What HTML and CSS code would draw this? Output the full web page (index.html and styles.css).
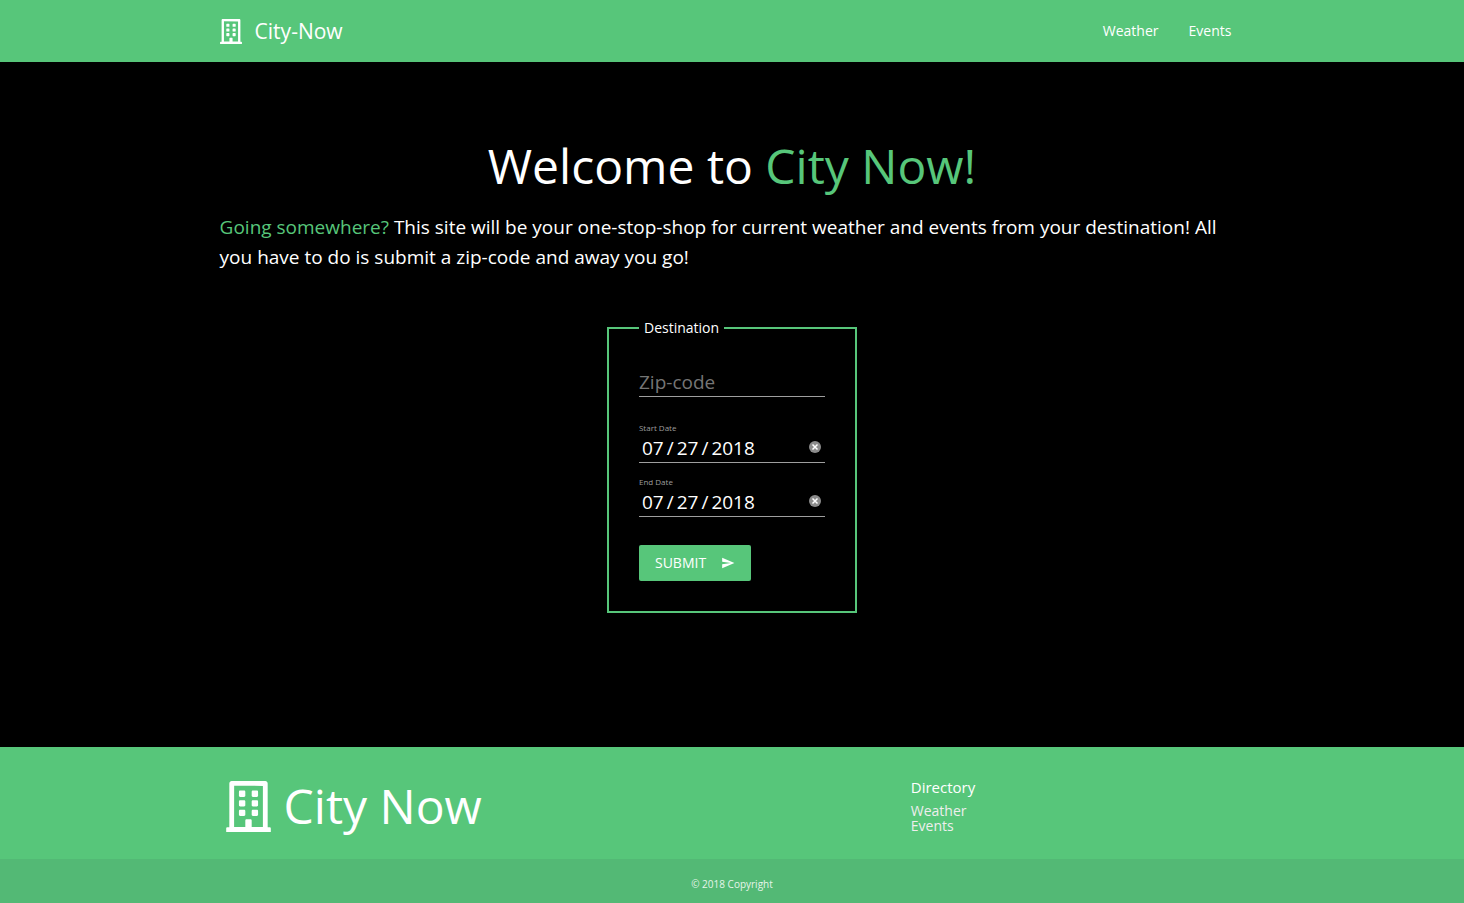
FILE: index.html
```html
<!DOCTYPE html>
<html lang="en">
<head>
  <meta charset="utf-8">
  <meta name="viewport" content="width=device-width, initial-scale=1">
  <title>City-Now</title>
  <link rel="stylesheet" href="styles.css">
</head>
<body>
  <svg class="sprite" aria-hidden="true">
    <symbol id="building" viewBox="0 0 448 512">
      <path d="M128 148v-40c0-6.6 5.4-12 12-12h40c6.6 0 12 5.4 12 12v40c0 6.6-5.4 12-12 12h-40c-6.6 0-12-5.4-12-12zm140 12h40c6.6 0 12-5.4 12-12v-40c0-6.6-5.4-12-12-12h-40c-6.6 0-12 5.4-12 12v40c0 6.6 5.4 12 12 12zm-128 96h40c6.6 0 12-5.4 12-12v-40c0-6.6-5.4-12-12-12h-40c-6.6 0-12 5.4-12 12v40c0 6.6 5.4 12 12 12zm128 0h40c6.6 0 12-5.4 12-12v-40c0-6.6-5.4-12-12-12h-40c-6.6 0-12 5.4-12 12v40c0 6.6 5.4 12 12 12zm-76 84v-40c0-6.6-5.4-12-12-12h-40c-6.6 0-12 5.4-12 12v40c0 6.6 5.4 12 12 12h40c6.6 0 12-5.4 12-12zm76 12h40c6.6 0 12-5.4 12-12v-40c0-6.6-5.4-12-12-12h-40c-6.6 0-12 5.4-12 12v40c0 6.6 5.4 12 12 12zm180 124v36H0v-36c0-6.6 5.4-12 12-12h19.500V24c0-13.300 10.700-24 24-24h337c13.300 0 24 10.700 24 24v440H436c6.600 0 12 5.400 12 12zM79.500 463H192v-67c0-6.600 5.400-12 12-12h40c6.600 0 12 5.400 12 12v67h112.500V49L80 48l-.5 415z"/>
    </symbol>
    <symbol id="clear" viewBox="0 0 12 12">
      <circle cx="6" cy="6" r="6" fill="#8c8c8c"/>
      <path d="M3.500 3.500l5 5M8.500 3.500l-5 5" stroke="#fff" stroke-width="1.500" fill="none"/>
    </symbol>
  </svg>

  <header class="navbar">
    <nav class="container navbar-inner">
      <a class="brand" href="#"><svg class="brand-icon" aria-hidden="true"><use href="#building"/></svg>City-Now</a>
      <ul class="nav-links">
        <li><a href="#weather">Weather</a></li>
        <li><a href="#events">Events</a></li>
      </ul>
    </nav>
  </header>

  <main class="container main">
    <h1 class="title">Welcome to <span class="accent">City Now!</span></h1>
    <p class="intro"><span class="accent">Going somewhere?</span> This site will be your one-stop-shop for current weather and events from your destination! All you have to do is submit a zip-code and away you go!</p>
    <form class="search">
      <fieldset class="panel">
        <legend>Destination</legend>
        <input class="line-input zip" type="text" placeholder="Zip-code" aria-label="Zip-code">
        <div class="field">
          <label for="start">Start Date</label>
          <div class="date-row">
            <input id="start" type="date" value="2018-07-27">
            <button class="clear" type="button" aria-label="Clear start date"><svg aria-hidden="true"><use href="#clear"/></svg></button>
          </div>
        </div>
        <div class="field">
          <label for="end">End Date</label>
          <div class="date-row">
            <input id="end" type="date" value="2018-07-27">
            <button class="clear" type="button" aria-label="Clear end date"><svg aria-hidden="true"><use href="#clear"/></svg></button>
          </div>
        </div>
        <button class="submit" type="submit">SUBMIT
          <svg class="send" viewBox="0 0 24 24" aria-hidden="true"><path d="M2 21L23 12 2 3v7l15 2-15 2z"/></svg>
        </button>
      </fieldset>
    </form>
  </main>

  <footer class="footer">
    <div class="container footer-inner">
      <div class="footer-brand"><svg class="footer-icon" aria-hidden="true"><use href="#building"/></svg>City Now</div>
      <div class="directory">
        <h2>Directory</h2>
        <ul>
          <li><a href="#weather">Weather</a></li>
          <li><a href="#events">Events</a></li>
        </ul>
      </div>
    </div>
    <div class="copyright">© 2018 Copyright</div>
  </footer>
</body>
</html>
```
FILE: styles.css
```css
* {
  box-sizing: border-box;
}

body {
  display: flex;
  flex-direction: column;
  min-height: 100vh;
  margin: 0;
  background: #000;
  color: #fff;
  font: 14px/1.5 "Open Sans", "Noto Sans", sans-serif;
}

a {
  color: inherit;
  text-decoration: none;
}

ul {
  margin: 0;
  padding: 0;
  list-style: none;
}

svg {
  fill: currentColor;
}

.sprite {
  position: absolute;
  width: 0;
  height: 0;
}

.container {
  width: 70%;
  margin: 0 auto;
}

.accent {
  color: #57c67a;
}

.navbar,
.footer {
  background: #57c67a;
}

.navbar-inner,
.brand,
.nav-links {
  display: flex;
  align-items: center;
}

.navbar-inner {
  justify-content: space-between;
  line-height: 62px;
}

.brand {
  gap: 13px;
  font-size: 21px;
}

.brand-icon {
  width: 22px;
  height: 25px;
}

.nav-links {
  gap: 30px;
  padding-right: 13px;
}

.main {
  flex: 1;
  padding-top: 72px;
}

.title {
  margin: 0;
  font-size: 48px;
  font-weight: 400;
  line-height: 64px;
  text-align: center;
}

.intro {
  margin: 14px 0 0;
  font-size: 19px;
  line-height: 30px;
}

.search {
  display: flex;
  justify-content: center;
  margin-top: 45px;
}

.panel {
  width: 250px;
  margin: 0;
  padding: 28px 30px 30px;
  border: 2px solid #57c67a;
}

.panel legend {
  padding: 0 5px;
  line-height: 22px;
}

.line-input,
.date-row {
  width: 100%;
  border: 0;
  border-bottom: 1px solid #9e9e9e;
}

.panel input {
  background: transparent;
  color: #fff;
  font: 19px/28px "Open Sans", "Noto Sans", sans-serif;
  outline: 0;
}

.zip {
  display: block;
  height: 30px;
  margin-bottom: 25px;
  padding: 0;
}

.zip::placeholder {
  color: #757575;
}

.field {
  margin-bottom: 13px;
}

.field label {
  display: block;
  color: #9e9e9e;
  font-size: 8px;
  line-height: 12px;
}

.date-row {
  display: flex;
  align-items: center;
  justify-content: space-between;
  padding: 0 4px 0 2px;
}

.date-row input {
  width: 150px;
  height: 28px;
  padding: 0;
  border: 0;
}

.date-row input::-webkit-calendar-picker-indicator {
  display: none;
}

.date-row input::-webkit-datetime-edit-text {
  padding: 0 2px;
}

.clear {
  display: flex;
  padding: 0 0 2px;
  border: 0;
  background: none;
}

.clear svg {
  width: 12px;
  height: 12px;
}

.submit {
  display: flex;
  align-items: center;
  gap: 15px;
  height: 36px;
  margin-top: 28px;
  padding: 0 16px;
  border: 0;
  border-radius: 2px;
  background: #57c67a;
  color: #fff;
  font: 14px/36px "Open Sans", "Noto Sans", sans-serif;
}

.send {
  width: 14px;
  height: 14px;
}

.footer-inner {
  display: grid;
  grid-template-columns: 2fr 1fr;
  padding: 30px 0 24px;
}

.footer-brand {
  display: flex;
  align-items: center;
  gap: 13px;
  padding-left: 6px;
  font-size: 48px;
  line-height: 58px;
}

.footer-icon {
  width: 45px;
  height: 51px;
}

.directory {
  padding-left: 8px;
}

.directory h2 {
  margin: 0 0 6px;
  font-size: 15px;
  font-weight: 400;
  line-height: 20px;
}

.directory li {
  color: #eee;
  line-height: 15px;
}

.copyright {
  padding: 18px 0 12px;
  background: #53b975;
  color: #e6f5ea;
  font-size: 10px;
  line-height: 14px;
  text-align: center;
}
```
